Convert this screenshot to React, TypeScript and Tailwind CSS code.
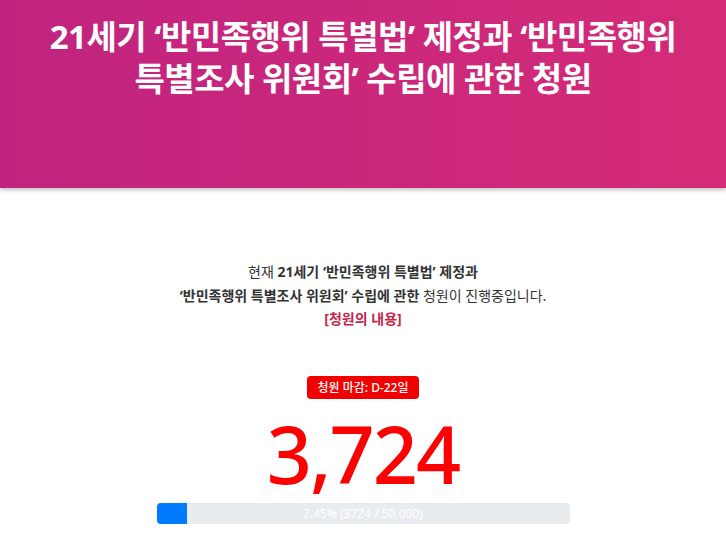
export default function App() {
  return (
    <div className="min-h-screen bg-white font-['Noto_Sans','Noto_Sans_CJK_KR',sans-serif]">
      <header className="h-[188px] bg-gradient-to-r from-[#c0237f] to-[#d52b78] shadow-[0_2px_4px_rgba(0,0,0,0.25)]">
        <h1 className="pt-[16px] text-center text-[33px] font-bold leading-[42px] tracking-[-0.5px] text-white">
          21세기 ‘반민족행위 특별법’ 제정과 ‘반민족행위
          <br />
          특별조사 위원회’ 수립에 관한 청원
        </h1>
      </header>

      <main className="flex flex-col items-center pt-[72px]">
        <div className="w-[420px] text-center text-[14px] leading-[23.5px] text-[#333]">
          <p>
            현재 <b>21세기 ‘반민족행위 특별법’ 제정과</b>
            <br />
            <b>‘반민족행위 특별조사 위원회’ 수립에 관한</b> 청원이 진행중입니다.
          </p>
          <a className="font-bold text-[#c5254a]">[청원의 내용]</a>
        </div>

        <span className="mt-[45px] rounded-[4px] bg-[#f20000] px-[10px] py-[3px] text-[12px] font-medium leading-[17px] text-white">
          청원 마감: D-22일
        </span>

        <div className="mt-[16px] text-[79px] font-medium leading-[78px] tracking-[-2px] text-[#ff0000]">3,724</div>

        <div className="relative mt-[10px] h-[21px] w-[413px] overflow-hidden rounded-[4px] bg-[#e9ecef]">
          <div className="h-full w-[7.45%] bg-[#007bff]" />
          <span className="absolute inset-0 text-center text-[12px] leading-[21px] text-white">
            7.45% (3724 / 50,000)
          </span>
        </div>
      </main>
    </div>
  )
}
